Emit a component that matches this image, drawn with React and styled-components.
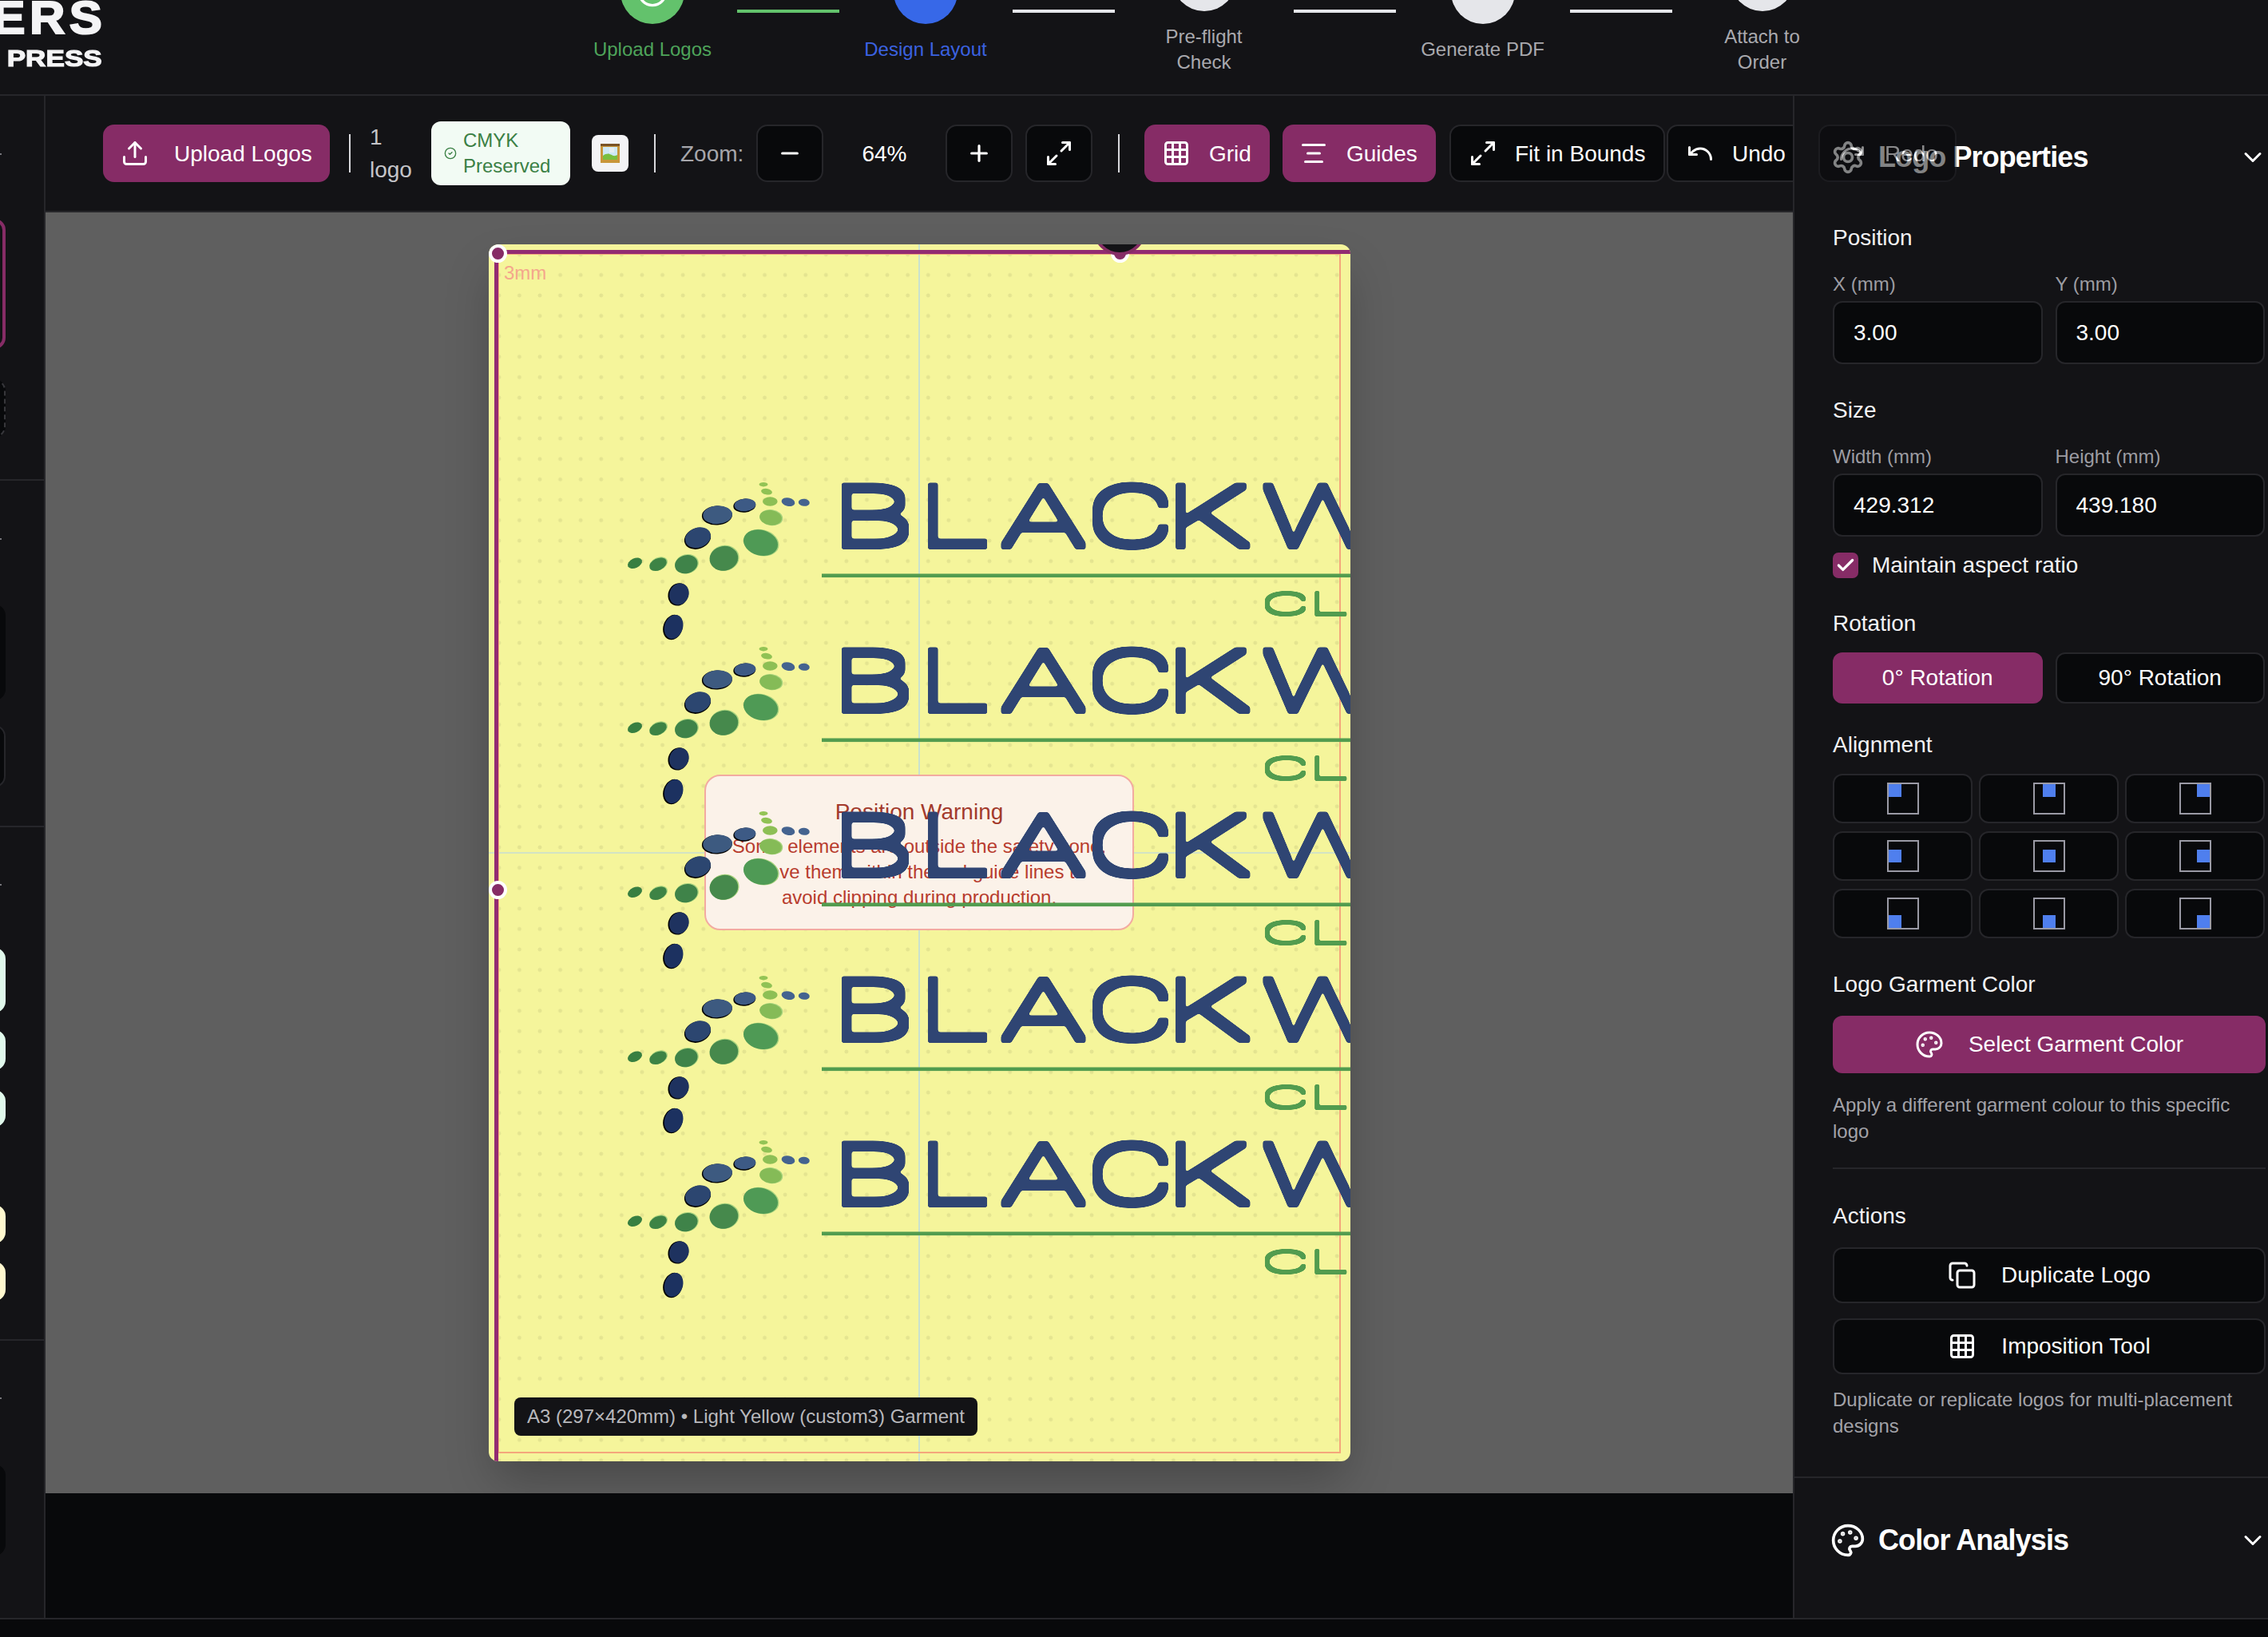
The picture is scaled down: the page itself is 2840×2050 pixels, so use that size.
import React from 'react';
import styled, { createGlobalStyle, css } from 'styled-components';
import {
  Upload, Minus, Plus, Maximize2, Grid3x3, AlignCenter, Undo, Redo, Settings,
  ChevronDown, Check, Palette, Copy, CircleCheck,
} from 'lucide-react';

const PINK = '#862c66';
const PANEL = '#131316';
const BLACK = '#08090b';
const LINE = '#26262a';

const Global = createGlobalStyle`
  html, body { margin: 0; padding: 0; width: 2840px; height: 2050px; overflow: hidden; background: ${BLACK}; }
  * { box-sizing: border-box; }
  body { font-family: "Liberation Sans", Arial, sans-serif; color: #fff; }
`;

const spaced = css`margin-left: ${(p) => p.$ml || 0}px;`;

const Frame = styled.div`
  width: 2840px;
  height: 2140px;
  margin-top: -90px;
  display: flex;
  flex-direction: column;
  overflow: hidden;
`;

/* ---------- header ---------- */
const Header = styled.header`
  height: 210px;
  flex: none;
  display: flex;
  align-items: center;
  background: ${PANEL};
  border-bottom: 2px solid ${LINE};
`;
const Brand = styled.div`
  width: 128px;
  flex: none;
  align-self: flex-start;
  padding-top: 84px;
  display: flex;
  flex-direction: column;
  align-items: flex-end;
  overflow: hidden;
  font-weight: 700;
  color: #f4f4f6;
  white-space: nowrap;
`;
const BrandTop = styled.div`
  font-size: 57px;
  line-height: 56px;
  letter-spacing: 5px;
  margin-right: -5px;
  transform: scaleX(1.08);
  transform-origin: right center;
  -webkit-text-stroke: 2px #f4f4f6;
`;
const BrandSub = styled.div`
  font-size: 30px;
  line-height: 30px;
  margin-top: 8px;
  transform: scaleX(1.17);
  transform-origin: right center;
  -webkit-text-stroke: 1.2px #f4f4f6;
`;
const Stepper = styled.nav`
  display: flex;
  align-items: center;
  gap: 32px;
  margin-left: 615.5px;
`;
const Step = styled.div`
  width: ${(p) => p.$w}px;
  flex: none;
  display: flex;
  flex-direction: column;
  align-items: center;
  gap: 16px;
`;
const StepDot = styled.div`
  width: 80px;
  height: 80px;
  flex: none;
  border-radius: 50%;
  background: ${(p) => p.$c};
  color: #fff;
  display: flex;
  align-items: center;
  justify-content: center;
`;
const StepLabel = styled.div`
  font-size: 24px;
  line-height: 32px;
  text-align: center;
  white-space: pre;
  color: ${(p) => p.$c};
`;
const Connector = styled.div`
  width: 128px;
  height: 4px;
  flex: none;
  background: ${(p) => p.$c};
`;

/* ---------- shell ---------- */
const Main = styled.div`
  height: 1906px;
  flex: none;
  display: flex;
`;
const Sidebar = styled.aside`
  width: 57px;
  flex: none;
  background: ${PANEL};
  border-right: 2px solid ${LINE};
  overflow: hidden;
  display: flex;
  flex-direction: column;
`;
const SideTick = styled.div`
  width: 2px;
  height: 2px;
  flex: none;
  margin-top: ${(p) => p.$mt}px;
  background: #77777c;
`;
const SideRule = styled.div`
  height: 2px;
  flex: none;
  margin-top: ${(p) => p.$mt}px;
  background: ${LINE};
`;
const SideCard = styled.div`
  width: 107px;
  flex: none;
  margin-left: -100px;
  margin-top: ${(p) => p.$mt}px;
  height: ${(p) => p.$h}px;
  border-radius: 14px;
  background: ${(p) => p.$bg};
  border: ${(p) => p.$border || 'none'};
`;
const Center = styled.div`
  flex: 1;
  min-width: 0;
  display: flex;
  flex-direction: column;
  background: ${BLACK};
`;
const Toolbar = styled.div`
  height: 146px;
  flex: none;
  display: flex;
  align-items: center;
  padding-left: 72px;
  background: ${PANEL};
  border-bottom: 2px solid ${LINE};
  white-space: nowrap;
`;
const ToolButton = styled.button`
  ${spaced}
  width: ${(p) => p.$w}px;
  height: 72px;
  flex: none;
  display: flex;
  align-items: center;
  justify-content: ${(p) => (p.$square ? 'center' : 'flex-start')};
  gap: ${(p) => p.$gap || 23}px;
  padding: 0 0 0 ${(p) => (p.$square ? 0 : p.$pl || 22)}px;
  border-radius: 14px;
  border: ${(p) => (p.$active ? 'none' : `2px solid ${LINE}`)};
  background: ${(p) => (p.$active ? PINK : BLACK)};
  opacity: ${(p) => (p.$disabled ? 0.5 : 1)};
  color: #fff;
  font: 28px "Liberation Sans", Arial, sans-serif;
`;
const ToolText = styled.span`
  padding-top: 2px;
`;
const Divider = styled.div`
  ${spaced}
  width: 2px;
  height: 48px;
  flex: none;
  background: #d8d8dc;
`;
const Count = styled.div`
  ${spaced}
  width: 52px;
  flex: none;
  white-space: normal;
  font-size: 28px;
  line-height: 41px;
  color: #c4c4c8;
`;
const Badge = styled.div`
  ${spaced}
  width: 174px;
  height: 80px;
  flex: none;
  display: flex;
  align-items: center;
  gap: 8px;
  padding-left: 16px;
  border-radius: 12px;
  background: #f2fbf4;
  color: #3b8045;
  white-space: normal;
  font-size: 24px;
  line-height: 32px;
`;
const PreviewChip = styled.div`
  ${spaced}
  width: 46px;
  height: 46px;
  flex: none;
  display: flex;
  align-items: center;
  justify-content: center;
  border-radius: 8px;
  background: #f3f3f5;
`;
const ZoomLabel = styled.div`
  ${spaced}
  flex: none;
  width: 78px;
  padding-top: 2px;
  font-size: 28px;
  color: #a6a6ab;
`;
const ZoomValue = styled.div`
  width: 153px;
  flex: none;
  padding-top: 2px;
  font-size: 28px;
  text-align: center;
`;

/* ---------- canvas ---------- */
const Canvas = styled.main`
  height: 1604px;
  flex: none;
  display: flex;
  align-items: center;
  justify-content: center;
  overflow: hidden;
  background: #5f5f5f;
`;
const PaperWrap = styled.div`
  flex: none;
  margin-left: 1px;
  border-radius: 12px;
  box-shadow: 0 30px 60px -8px rgba(0, 0, 0, 0.25);
`;
const Paper = styled.div`
  position: relative;
  width: 1079px;
  height: 1524px;
  overflow: hidden;
  border-radius: 12px;
  background-color: #f5f59b;
  background-image: radial-gradient(circle, rgba(0, 0, 0, 0.07) 2.2px, transparent 2.7px);
  background-size: 25.6px 25.6px;
`;
const GuideV = styled.div`
  position: absolute;
  left: 538px;
  top: 0;
  bottom: 0;
  width: 2px;
  background: #c9e2cf;
`;
const GuideH = styled.div`
  position: absolute;
  left: 0;
  right: 0;
  top: 761px;
  height: 2px;
  background: #d3e3c4;
`;
const Warning = styled.div`
  position: absolute;
  left: 270px;
  top: 664px;
  width: 538px;
  height: 195px;
  padding: 25px 30px 0;
  border-radius: 20px;
  border: 2px solid #f3aba0;
  background: #fbf2e9;
  text-align: center;
`;
const WarningTitle = styled.div`
  font-size: 28px;
  line-height: 40px;
  color: #a33a2c;
`;
const WarningBody = styled.div`
  margin-top: 7px;
  font-size: 24px;
  line-height: 32px;
  color: #b83c2e;
`;
const Bleed = styled.div`
  position: absolute;
  left: 11px;
  top: 11px;
  right: 12px;
  bottom: 10px;
  border: 2px solid #f4a77c;
`;
const SelectTop = styled.div`
  position: absolute;
  left: 7px;
  right: 0;
  top: 7px;
  height: 4.5px;
  background: #922b72;
`;
const SelectLeft = styled.div`
  position: absolute;
  left: 7px;
  top: 7px;
  bottom: 0;
  width: 5px;
  background: #922b72;
`;
const Handle = styled.div`
  position: absolute;
  left: ${(p) => p.$x - 11.5}px;
  top: ${(p) => p.$y - 11.5}px;
  width: 23px;
  height: 23px;
  border-radius: 50%;
  background: ${PINK};
  border: 4px solid #fff;
`;
const RotateCap = styled.div`
  position: absolute;
  left: 757px;
  top: -52px;
  width: 66px;
  height: 66px;
  border-radius: 50%;
  background: ${PANEL};
  border: 4px solid ${PINK};
`;
const BleedLabel = styled.div`
  position: absolute;
  left: 19px;
  top: 22px;
  font-size: 24px;
  line-height: 28px;
  color: #f4a78c;
`;
const SizeTag = styled.div`
  position: absolute;
  left: 32px;
  bottom: 32px;
  height: 48px;
  display: flex;
  align-items: center;
  padding: 0 16px;
  border-radius: 8px;
  background: ${PANEL};
  color: #b8b8bc;
  font-size: 24px;
  white-space: nowrap;
`;
const LogoSvg = styled.svg`
  position: absolute;
  left: 178px;
  top: ${(p) => p.$top}px;
  overflow: visible;
`;
const Wordmark = styled.text`
  font-family: Roboto, "Liberation Sans", sans-serif;
  font-weight: 300;
  font-size: ${(p) => p.$size}px;
  fill: ${(p) => p.$c};
`;

/* ---------- right panel ---------- */
const Panel = styled.aside`
  width: 595px;
  flex: none;
  background: ${PANEL};
  border-left: 2px solid ${LINE};
  display: flex;
  flex-direction: column;
`;
const PanelBody = styled.div`
  height: 1731px;
  flex: none;
  padding: 0 3px 0 48px;
  border-bottom: 2px solid ${LINE};
  display: flex;
  flex-direction: column;
`;
const SectionHead = styled.div`
  height: 44px;
  flex: none;
  margin-top: ${(p) => p.$mt || 0}px;
  display: flex;
  align-items: center;
  gap: 16px;
  margin-left: -3px;
  margin-right: -2px;
`;
const SectionTitle = styled.h2`
  flex: 1;
  margin: 0;
  font-size: 36px;
  font-weight: 700;
  letter-spacing: -0.9px;
  color: #fff;
`;
const Label = styled.div`
  flex: none;
  margin-top: ${(p) => p.$mt || 0}px;
  font-size: 28px;
  line-height: 40px;
  color: #f2f2f4;
`;
const TwoCol = styled.div`
  flex: none;
  margin-top: ${(p) => p.$mt || 0}px;
  display: grid;
  grid-template-columns: 262.5px 262.5px;
  column-gap: 16px;
`;
const FieldLabel = styled.div`
  margin-top: ${(p) => p.$mt || 0}px;
  margin-bottom: 5px;
  font-size: 24px;
  line-height: 32px;
  color: #9c9ca2;
`;
const Field = styled.div`
  height: 79px;
  display: flex;
  align-items: center;
  padding-left: 24px;
  border-radius: 12px;
  border: 2px solid ${LINE};
  background: ${BLACK};
  font-size: 28px;
  color: #fff;
`;
const CheckRow = styled.div`
  flex: none;
  margin-top: 20px;
  display: flex;
  align-items: center;
  gap: 17px;
  font-size: 28px;
  color: #f2f2f4;
`;
const CheckBox = styled.div`
  width: 32px;
  height: 32px;
  display: flex;
  align-items: center;
  justify-content: center;
  border-radius: 7px;
  background: ${PINK};
  color: #fff;
`;
const PanelButton = styled.button`
  height: ${(p) => p.$h}px;
  width: 100%;
  flex: none;
  margin-top: ${(p) => p.$mt || 0}px;
  display: flex;
  align-items: center;
  justify-content: center;
  gap: ${(p) => p.$gap || 0}px;
  padding: 0;
  border-radius: 12px;
  border: ${(p) => (p.$active ? 'none' : `2px solid ${LINE}`)};
  background: ${(p) => (p.$active ? PINK : BLACK)};
  color: #fff;
  font: 28px "Liberation Sans", Arial, sans-serif;
`;
const AlignGrid = styled.div`
  flex: none;
  margin-top: 16px;
  display: grid;
  grid-template-columns: repeat(3, 175px);
  grid-auto-rows: 62px;
  column-gap: 8px;
  row-gap: 10px;
`;
const AlignCell = styled.button`
  display: flex;
  align-items: center;
  justify-content: center;
  padding: 0;
  border-radius: 12px;
  border: 2px solid ${LINE};
  background: ${BLACK};
`;
const AlignBox = styled.div`
  width: 40px;
  height: 40px;
  display: flex;
  justify-content: ${(p) => p.$h};
  align-items: ${(p) => p.$v};
  border: 2px solid #9a9aa5;
`;
const AlignMark = styled.div`
  width: 16px;
  height: 16px;
  background: #4f7fee;
`;
const Help = styled.p`
  flex: none;
  margin: ${(p) => p.$mt || 0}px 0 0;
  font-size: 24px;
  line-height: 32.5px;
  color: #a2a2a8;
`;
const Rule = styled.div`
  height: 2px;
  flex: none;
  margin-top: ${(p) => p.$mt || 0}px;
  background: ${LINE};
`;
const Analysis = styled.div`
  padding: 56px 3px 0 48px;
`;
const BottomBar = styled.div`
  height: 26px;
  flex: none;
  border-top: 2px solid ${LINE};
  background: ${BLACK};
`;

/* ---------- data ---------- */
const steps = [
  { label: 'Upload Logos', w: 147, dot: '#63c26c', text: '#4ea45a', line: '#63c26c', check: true },
  { label: 'Design Layout', w: 153, dot: '#3768e8', text: '#3b62e0', line: '#e5e6ea' },
  { label: 'Pre-flight\nCheck', w: 160, dot: '#e5e6ea', text: '#a9a9ae', line: '#e5e6ea' },
  { label: 'Generate PDF', w: 154, dot: '#e5e6ea', text: '#a9a9ae', line: '#e5e6ea' },
  { label: 'Attach to\nOrder', w: 162, dot: '#e5e6ea', text: '#a9a9ae' },
];

const sideItems = [
  { t: 'tick', mt: 72 },
  { t: 'card', mt: 80, h: 163, bg: 'transparent', border: `4px solid ${PINK}` },
  { t: 'card', mt: 38, h: 73, bg: BLACK, border: '2px dashed #37373b' },
  { t: 'rule', mt: 52 },
  { t: 'tick', mt: 72 },
  { t: 'card', mt: 81, h: 120, bg: BLACK },
  { t: 'card', mt: 31, h: 78, bg: BLACK, border: `2px solid ${LINE}` },
  { t: 'rule', mt: 48 },
  { t: 'tick', mt: 71 },
  { t: 'card', mt: 78, h: 81, bg: '#e0f8eb' },
  { t: 'card', mt: 22, h: 50, bg: '#e0f8eb' },
  { t: 'card', mt: 25, h: 46, bg: '#e0f8eb' },
  { t: 'card', mt: 98, h: 48, bg: '#fff8cf' },
  { t: 'card', mt: 23, h: 49, bg: '#fff8cf' },
  { t: 'rule', mt: 48 },
  { t: 'tick', mt: 71 },
  { t: 'card', mt: 82, h: 114, bg: BLACK },
];

const dots = [
  [166, 6.7, 5.4, 2.7, 0, '#93c455'],
  [170, 15.7, 7, 3.7, 10, '#90c255'],
  [174.3, 28, 9.3, 5.8, 0, '#8dbf55'],
  [175, 48.3, 14.5, 10, 8, '#85bb57', '#a9d47e'],
  [162.5, 79.7, 22.5, 16.5, 15, '#4f9a55', '#a9d47e'],
  [116.4, 99.3, 18.5, 16, -10, '#46894c', '#a9d47e'],
  [69.3, 106.7, 15, 12, -15, '#3f8349', '#a9d47e'],
  [34, 106.7, 12, 8, -25, '#3d8345', '#a9d47e'],
  [5, 105.3, 9.5, 6, -25, '#387f41'],
  [216.8, 29.3, 7, 4.5, 5, '#44638f'],
  [197, 28.7, 8.5, 5.2, 12, '#44638f'],
  [143, 32.3, 14, 8.5, -5, '#3d5a85', '#000'],
  [108.6, 44.7, 19, 12, -3, '#3d5a80', '#000'],
  [84, 73.3, 17, 13, -20, '#2c4670', '#000'],
  [60.4, 144, 12.5, 14.5, 25, '#1e325f', '#000'],
  [53.6, 185, 12, 16, 18, '#1c3160', '#000'],
];

function LogoFilters() {
  return (
    <svg width="0" height="0" style={{ position: 'absolute' }}>
      <defs>
        <filter id="roundBig" filterUnits="userSpaceOnUse" x="0" y="0" width="1000" height="200" colorInterpolationFilters="sRGB">
          <feMorphology operator="dilate" radius="1 4" />
          <feGaussianBlur stdDeviation="1.6" />
          <feComponentTransfer><feFuncA type="linear" slope="6" intercept="-2.5" /></feComponentTransfer>
        </filter>
        <filter id="roundSmall" filterUnits="userSpaceOnUse" x="0" y="0" width="1000" height="200" colorInterpolationFilters="sRGB">
          <feMorphology operator="dilate" radius="0 1.5" />
          <feGaussianBlur stdDeviation="0.8" />
          <feComponentTransfer><feFuncA type="linear" slope="5" intercept="-2" /></feComponentTransfer>
        </filter>
      </defs>
    </svg>
  );
}

function Logo({ top }) {
  return (
    <LogoSvg $top={top} width="920" height="200" viewBox="0 0 920 200">
      {dots.map(([cx, cy, rx, ry, rot, fill, edge], i) => (
        <g key={i} transform={`rotate(${rot} ${cx} ${cy})`}>
          {edge && <ellipse cx={cx + (edge === '#000' ? -0.8 : 0.8)} cy={cy + (edge === '#000' ? 0.8 : -0.3)} rx={rx} ry={ry} fill={edge} />}
          <ellipse cx={cx} cy={cy} rx={rx - (edge ? 0.6 : 0)} ry={ry - (edge ? 0.6 : 0)} fill={fill} />
        </g>
      ))}
      <g filter="url(#roundBig)">
        <Wordmark $size={106} $c="#2f4573" transform="scale(1.66 1)" x="150 215 278 342 402 474" y="84">BLACKW</Wordmark>
      </g>
      <rect x="239" y="118.5" width="700" height="4.6" fill="#529c4f" />
      <g filter="url(#roundSmall)">
        <Wordmark $size={39} $c="#529c4f" transform="scale(2.5 1)" x="315 339" y="170">CL</Wordmark>
      </g>
    </LogoSvg>
  );
}

function FrameGlyph() {
  return (
    <svg width="26" height="26" viewBox="0 0 26 26">
      <rect x="1" y="1" width="24" height="24" fill="#c8963a" />
      <rect x="1" y="1" width="24" height="3" fill="#7a5326" />
      <rect x="4" y="5" width="18" height="16" fill="#cde8f4" />
      <path d="M4 16c4-3 8-3 11-1s5 1 7 0v6H4z" fill="#79bf3f" />
      <path d="M12 6h6v6h-6z" fill="#e6eef0" />
    </svg>
  );
}

const hPos = ['flex-start', 'center', 'flex-end'];

export default function App() {
  return (
    <>
      <Global />
      <LogoFilters />
      <Frame>
        <Header>
          <Brand>
            <BrandTop>ERS</BrandTop>
            <BrandSub>PRESS</BrandSub>
          </Brand>
          <Stepper>
            {steps.map((s) => (
              <React.Fragment key={s.label}>
                <Step $w={s.w}>
                  <StepDot $c={s.dot}>{s.check && <CircleCheck size={40} strokeWidth={2} />}</StepDot>
                  <StepLabel $c={s.text}>{s.label}</StepLabel>
                </Step>
                {s.line && <Connector $c={s.line} />}
              </React.Fragment>
            ))}
          </Stepper>
        </Header>

        <Main>
          <Sidebar>
            {sideItems.map((it, i) => {
              if (it.t === 'tick') return <SideTick key={i} $mt={it.mt} />;
              if (it.t === 'rule') return <SideRule key={i} $mt={it.mt} />;
              return <SideCard key={i} $mt={it.mt} $h={it.h} $bg={it.bg} $border={it.border} />;
            })}
          </Sidebar>

          <Center>
            <Toolbar>
              <ToolButton $w={284} $active $gap={31}><Upload size={36} strokeWidth={2} /><ToolText>Upload Logos</ToolText></ToolButton>
              <Divider $ml={24} />
              <Count $ml={24}>1 logo</Count>
              <Badge $ml={25}>
                <CircleCheck size={16} strokeWidth={2} style={{ flex: 'none' }} />
                <span>CMYK Preserved</span>
              </Badge>
              <PreviewChip $ml={27}><FrameGlyph /></PreviewChip>
              <Divider $ml={32} />
              <ZoomLabel $ml={31}>Zoom:</ZoomLabel>
              <ToolButton $ml={17} $w={84} $square><Minus size={32} strokeWidth={2.4} /></ToolButton>
              <ZoomValue>64%</ZoomValue>
              <ToolButton $w={84} $square><Plus size={32} strokeWidth={2.4} /></ToolButton>
              <ToolButton $ml={16} $w={84} $square><Maximize2 size={36} strokeWidth={2} /></ToolButton>
              <Divider $ml={32} />
              <ToolButton $ml={31} $w={157} $active><Grid3x3 size={36} strokeWidth={2} /><ToolText>Grid</ToolText></ToolButton>
              <ToolButton $ml={16} $w={192} $active $pl={21}><AlignCenter size={36} strokeWidth={2} /><ToolText>Guides</ToolText></ToolButton>
              <ToolButton $ml={17} $w={270} $gap={22}><Maximize2 size={36} strokeWidth={2} /><ToolText>Fit in Bounds</ToolText></ToolButton>
              <ToolButton $ml={2} $w={180} $gap={22}><Undo size={36} strokeWidth={2} /><ToolText>Undo</ToolText></ToolButton>
              <ToolButton $ml={10} $w={173} $disabled><Redo size={36} strokeWidth={2} /><ToolText>Redo</ToolText></ToolButton>
            </Toolbar>
            <Canvas>
              <PaperWrap>
                <Paper>
                  <GuideV />
                  <GuideH />
                  <Warning>
                    <WarningTitle>Position Warning</WarningTitle>
                    <WarningBody>Some elements are outside the safety zone. Move them within the red guide lines to avoid clipping during production.</WarningBody>
                  </Warning>
                  <Bleed />
                  {[0, 1, 2, 3, 4].map((i) => <Logo key={i} top={294 + i * 206} />)}
                  <SelectTop />
                  <SelectLeft />
                  <Handle $x={790} $y={11} />
                  <RotateCap />
                  <Handle $x={11} $y={11} />
                  <Handle $x={11} $y={808} />
                  <BleedLabel>3mm</BleedLabel>
                  <SizeTag>A3 (297×420mm) • Light Yellow (custom3) Garment</SizeTag>
                </Paper>
              </PaperWrap>
            </Canvas>
          </Center>

          <Panel>
            <PanelBody>
              <SectionHead $mt={55}>
                <Settings size={44} strokeWidth={2} />
                <SectionTitle>Logo Properties</SectionTitle>
                <ChevronDown size={36} strokeWidth={2} />
              </SectionHead>

              <Label $mt={59}>Position</Label>
              <TwoCol $mt={1}>
                <div><FieldLabel $mt={21}>X (mm)</FieldLabel><Field>3.00</Field></div>
                <div><FieldLabel $mt={21}>Y (mm)</FieldLabel><Field>3.00</Field></div>
              </TwoCol>

              <Label $mt={38}>Size</Label>
              <TwoCol $mt={1}>
                <div><FieldLabel $mt={21}>Width (mm)</FieldLabel><Field>429.312</Field></div>
                <div><FieldLabel $mt={21}>Height (mm)</FieldLabel><Field>439.180</Field></div>
              </TwoCol>

              <CheckRow>
                <CheckBox><Check size={26} strokeWidth={3} /></CheckBox>
                Maintain aspect ratio
              </CheckRow>

              <Label $mt={37}>Rotation</Label>
              <TwoCol $mt={16}>
                <PanelButton $h={64} $active>0° Rotation</PanelButton>
                <PanelButton $h={64}>90° Rotation</PanelButton>
              </TwoCol>

              <Label $mt={32}>Alignment</Label>
              <AlignGrid>
                {hPos.map((v) => hPos.map((h) => (
                  <AlignCell key={v + h}>
                    <AlignBox $h={h} $v={v}><AlignMark /></AlignBox>
                  </AlignCell>
                )))}
              </AlignGrid>

              <Label $mt={38}>Logo Garment Color</Label>
              <PanelButton $h={72} $mt={19} $active $gap={31}><Palette size={36} strokeWidth={2} />Select Garment Color</PanelButton>
              <Help $mt={24}>Apply a different garment colour to this specific logo</Help>
              <Rule $mt={29} />

              <Label $mt={39}>Actions</Label>
              <PanelButton $h={70} $mt={19} $gap={31}><Copy size={36} strokeWidth={2} />Duplicate Logo</PanelButton>
              <PanelButton $h={70} $mt={19} $gap={31}><Grid3x3 size={36} strokeWidth={2} />Imposition Tool</PanelButton>
              <Help $mt={16}>Duplicate or replicate logos for multi-placement designs</Help>
            </PanelBody>
            <Analysis>
              <SectionHead>
                <Palette size={44} strokeWidth={2} />
                <SectionTitle>Color Analysis</SectionTitle>
                <ChevronDown size={36} strokeWidth={2} />
              </SectionHead>
            </Analysis>
          </Panel>
        </Main>
        <BottomBar />
      </Frame>
    </>
  );
}
